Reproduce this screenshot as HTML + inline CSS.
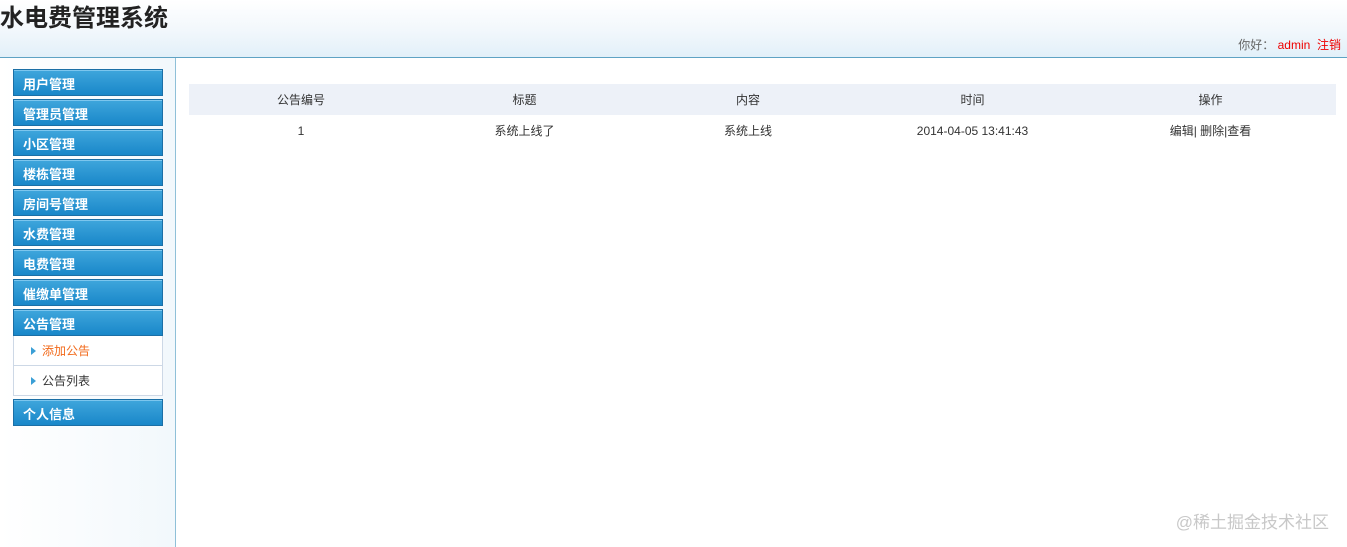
<!DOCTYPE html>
<html><head><meta charset="utf-8"><style>
*{margin:0;padding:0;box-sizing:border-box}
body{width:1347px;height:547px;overflow:hidden;background:#fff;font-family:"Liberation Sans","Noto Sans CJK SC",sans-serif;font-size:12px;color:#333;position:relative}
#hd{position:absolute;left:0;top:0;width:1347px;height:58px;background:linear-gradient(#fff 0%,#f3f8fc 50%,#e2f0f9 100%);border-bottom:1px solid #5fa3c4}
#hd h1{position:absolute;left:0;top:-2px;font-size:24px;font-weight:bold;color:#222;letter-spacing:0}
#hd .u{position:absolute;right:6px;top:36px;font-size:12px;color:#666}
#hd .u span{color:#e00}
#sb{position:absolute;left:0;top:58px;width:176px;height:489px;background:linear-gradient(90deg,#fff,#f2f8fc);border-right:1px solid #8fc0d8}
.m{position:absolute;left:13px;width:150px;height:27px;background:linear-gradient(#3fa6dc,#1987c9);border:1px solid #1b6fa6;color:#fff;font-weight:bold;font-size:13px;padding-left:9px;line-height:30px;box-shadow:inset 0 1px 0 #7cc6ee}
.s{position:absolute;left:13px;width:150px;height:30px;background:#fff;border:1px solid #cdd8e6;border-top:none;line-height:30px;padding-left:28px;font-size:12px;color:#333}
.s:before{content:"";position:absolute;left:17px;top:11px;border-left:5px solid #3a9fd6;border-top:4px solid transparent;border-bottom:4px solid transparent}
table{position:absolute;left:189px;top:84px;width:1147px;border-collapse:collapse}
th{background:#edf1f8;height:31px;font-weight:normal;font-size:12px;color:#333}
td{height:31px;text-align:center;font-size:12px;color:#333}
#wm{position:absolute;right:18px;top:508px;font-size:17px;color:#c8c8c8}
</style></head><body>
<div id="hd"><h1>水电费管理系统</h1><div class="u">你好： <span>admin</span> &nbsp;<span>注销</span></div></div>
<div id="sb"></div>
<div class="m" style="top:69px">用户管理</div>
<div class="m" style="top:99px">管理员管理</div>
<div class="m" style="top:129px">小区管理</div>
<div class="m" style="top:159px">楼栋管理</div>
<div class="m" style="top:189px">房间号管理</div>
<div class="m" style="top:219px">水费管理</div>
<div class="m" style="top:249px">电费管理</div>
<div class="m" style="top:279px">催缴单管理</div>
<div class="m" style="top:309px">公告管理</div>
<div class="s" style="top:336px;color:#f26a1b">添加公告</div>
<div class="s" style="top:366px">公告列表</div>
<div class="m" style="top:399px">个人信息</div>
<table><tr><th style="width:224px">公告编号</th><th style="width:223px">标题</th><th style="width:224px">内容</th><th style="width:225px">时间</th><th>操作</th></tr>
<tr><td>1</td><td>系统上线了</td><td>系统上线</td><td>2014-04-05 13:41:43</td><td>编辑| 删除|查看</td></tr></table>
<div id="wm">@稀土掘金技术社区</div>
</body></html>
